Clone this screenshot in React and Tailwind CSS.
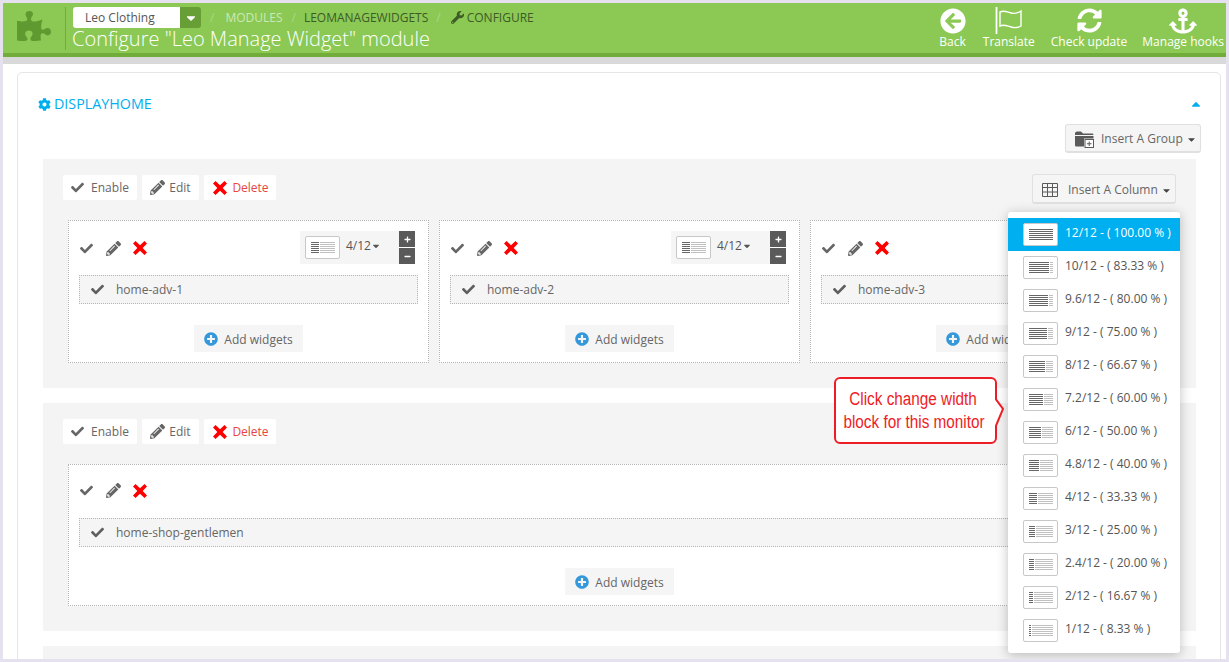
import {
  FaAnchor,
  FaArrowCircleLeft,
  FaCaretDown,
  FaCaretUp,
  FaCheck,
  FaCog,
  FaMinus,
  FaPencilAlt,
  FaPlus,
  FaPlusCircle,
  FaPuzzlePiece,
  FaSyncAlt,
  FaWrench,
} from "react-icons/fa";

const widths = [
  ["12/12 - ( 100.00 % )", 100],
  ["10/12 - ( 83.33 % )", 83],
  ["9.6/12 - ( 80.00 % )", 80],
  ["9/12 - ( 75.00 % )", 75],
  ["8/12 - ( 66.67 % )", 67],
  ["7.2/12 - ( 60.00 % )", 60],
  ["6/12 - ( 50.00 % )", 50],
  ["4.8/12 - ( 40.00 % )", 40],
  ["4/12 - ( 33.33 % )", 33],
  ["3/12 - ( 25.00 % )", 25],
  ["2.4/12 - ( 20.00 % )", 20],
  ["2/12 - ( 16.67 % )", 17],
  ["1/12 - ( 8.33 % )", 8],
];

const WidthIcon = ({ percent }) => {
  const dark = Math.round((percent / 100) * 24);
  return (
    <span className="flex h-[23px] w-[35px] shrink-0 items-center justify-center rounded-[2px] border border-[#c8c8c8] bg-white">
      <svg width="24" height="12" viewBox="0 0 24 12">
        {[0, 2, 4, 6, 8, 10].map((y) => (
          <g key={y}>
            <rect x="0" y={y} width={dark} height="1" fill="#666666" />
            <rect x={dark + 1} y={y} width={Math.max(0, 23 - dark)} height="1" fill="#c0c0c0" />
          </g>
        ))}
      </svg>
    </span>
  );
};

const CrossIcon = () => (
  <svg width="14" height="14" viewBox="0 0 14 14" fill="#ff0000" className="shrink-0">
    <path d="M2.500 0 7 4.300 11.500 0 14 2.500 9.700 7 14 11.500 11.500 14 7 9.700 2.500 14 0 11.500 4.300 7 0 2.500z" />
  </svg>
);

const FlagIcon = () => (
  <svg width="28" height="27" viewBox="0 0 28 27" fill="none" stroke="white">
    <path d="M1.500 0v27" strokeWidth="1.800" />
    <path d="M5 5c4-2 7 0 11 1s7 0 10-2v15c-3 2-6 2-10 1s-7-3-11-1z" strokeWidth="1.400" />
  </svg>
);

const FolderIcon = () => (
  <svg width="20" height="18" viewBox="0 0 20 18" fill="#5a5a5a">
    <path d="M0 3.500C0 2.500.8 1.500 2 1.500h4l2 2h9c1 0 1.500.6 1.500 1.500H0z" />
    <path d="M0 6h18.500v2.500H9v8H1.500C.6 16.500 0 16 0 15z" />
    <rect x="10" y="9.500" width="8.500" height="8" fill="white" stroke="#5a5a5a" />
    <path d="M13.700 11.500h1v1.800h1.800v1h-1.800v1.800h-1v-1.800h-1.800v-1h1.800z" />
  </svg>
);

const TableIcon = () => (
  <svg width="16" height="14" viewBox="0 0 16 14" fill="none" stroke="#5a5a5a">
    <path d="M.5.500h15v13H.5zM.5 4.500h15M.5 9h15M5.500.500v13M10.500.500v13" />
  </svg>
);

const ToolButton = ({ icon, label, className = "" }) => (
  <button className={`flex h-[25px] items-center justify-center rounded-[2px] bg-white text-[12px] ${className}`}>
    {icon}
    <span className="pt-[1px]">{label}</span>
  </button>
);

const GroupTools = () => (
  <div className="flex gap-[5px]">
    <ToolButton icon={<FaCheck className="text-[13px] text-[#666666]" />} label="Enable" className="w-[74px] gap-[7px] text-[#666666]" />
    <ToolButton icon={<FaPencilAlt className="text-[15px] text-[#666666]" />} label="Edit" className="w-[57px] gap-[4px] text-[#666666]" />
    <ToolButton icon={<CrossIcon />} label="Delete" className="w-[72px] gap-[5px] pl-[2px] text-[#e8463f]" />
  </div>
);

const InsertButton = ({ icon, label, className = "" }) => (
  <button className={`flex items-center rounded-[3px] border border-[#e0e0e0] border-b-2 bg-[#f5f5f5] pt-[2px] text-[12px] text-[#666666] ${className}`}>
    {icon}
    <span>{label}</span>
    <FaCaretDown className="ml-[3px] text-[11px] text-[#444444]" />
  </button>
);

const WidthSelect = () => (
  <div className="flex items-start">
    <div className="flex h-[33px] w-[99px] items-center bg-[#f5f5f5] pl-[5px]">
      <WidthIcon percent={33} />
      <span className="-mt-[3px] ml-[6px] text-[12px] text-[#555555]">4/12</span>
      <FaCaretDown className="-mt-[3px] text-[10px] text-[#555555]" />
    </div>
    <div className="flex flex-col gap-px">
      <span className="flex h-4 w-4 items-center justify-center bg-[#5a5a5a] text-white">
        <FaPlus className="text-[7px]" />
      </span>
      <span className="flex h-4 w-4 items-center justify-center bg-[#5a5a5a] text-white">
        <FaMinus className="text-[7px]" />
      </span>
    </div>
  </div>
);

const WidgetColumn = ({ name, className = "", selector = true, compact = false }) => (
  <div
    className={`flex flex-col border border-dotted border-[#b5b5b5] bg-white px-[10px] ${
      compact ? "h-[142px] pt-[9px]" : "h-[143px] pt-[10px]"
    } ${className}`}
  >
    <div className={`flex items-center justify-between pr-[3px] ${compact ? "h-[32px]" : "h-[33px]"}`}>
      <div className="flex items-center pl-[1px] pt-[1px]">
        <FaCheck className="text-[13px] text-[#666666]" />
        <FaPencilAlt className="ml-[13px] text-[15px] text-[#666666]" />
        <span className="ml-[12px]">
          <CrossIcon />
        </span>
      </div>
      {selector && <WidthSelect />}
    </div>
    <div
      className={`flex h-[29px] items-center border border-dotted border-[#b5b5b5] bg-[#f5f5f5] pl-[11px] text-[12px] text-[#666666] ${
        compact ? "mt-[12px]" : "mt-[11px]"
      }`}
    >
      <FaCheck className="text-[13px] text-[#5f5f5f]" />
      <span className="ml-[12px] pt-[1px]">{name}</span>
    </div>
    <div className="mt-[21px] flex justify-center">
      <button className="flex h-[27px] w-[109px] items-center justify-center gap-[6px] bg-[#f5f5f5] text-[12px] text-[#666666]">
        <FaPlusCircle className="text-[14px] text-[#3498db]" />
        <span className="pt-[2px]">Add widgets</span>
      </button>
    </div>
  </div>
);

const GroupPanel = ({ className = "", action, children }) => (
  <section className={`bg-[#f4f4f4] px-[20px] pt-[16px] ${className}`}>
    <div className="flex h-[30px] items-start justify-between">
      <GroupTools />
      {action}
    </div>
    {children}
  </section>
);

const HeaderAction = ({ icon, label, className = "" }) => (
  <button className={`flex flex-col items-center text-[12px] leading-[14px] text-white ${className}`}>
    <span className="flex h-[29px] items-center">{icon}</span>
    {label}
  </button>
);

const App = () => {
  return (
    <div className="relative h-[662px] w-[1229px] overflow-hidden border-[3px] border-[#e6e1ef] bg-white font-['Open_Sans',sans-serif]">
      <header className="flex h-[54px] items-start justify-between border-b-4 border-[#72ad3c] bg-[#8bc954]">
        <div className="flex">
          <div className="flex w-[48px] justify-center pl-[14px] pt-[4px]">
            <FaPuzzlePiece className="text-[38px] text-[#5f9a30]" />
          </div>
          <div className="ml-[14px] mt-[4px] h-[43px] border-l border-[#72ad3c] pl-[7px]">
            <div className="flex items-center text-[12px]">
              <div className="flex h-[21px] w-[128px] overflow-hidden rounded-[3px]">
                <span className="flex-1 bg-white pl-[12px] leading-[21px] text-[#555555]">Leo Clothing</span>
                <span className="flex w-[21px] items-center justify-center bg-[#679f36] text-white">
                  <FaCaretDown className="text-[14px]" />
                </span>
              </div>
              <span className="ml-[9px] text-[#a9d886]">/</span>
              <span className="ml-[11px] text-[#cde8b5]">MODULES</span>
              <span className="ml-[9px] text-[#a9d886]">/</span>
              <span className="ml-[8px] text-[#3e5a26]">LEOMANAGEWIDGETS</span>
              <span className="ml-[8px] text-[#a9d886]">/</span>
              <FaWrench className="ml-[10px] text-[13px] text-[#3e5a26]" />
              <span className="ml-[3px] text-[#3e5a26]">CONFIGURE</span>
            </div>
            <h1 className="-ml-[1px] text-[20px] font-light leading-[22px] text-white">Configure "Leo Manage Widget" module</h1>
          </div>
        </div>
        <div className="mr-[2px] mt-[3px] flex gap-[15px]">
          <HeaderAction icon={<FaArrowCircleLeft className="text-[26px]" />} label="Back" className="mr-[2px]" />
          <HeaderAction icon={<FlagIcon />} label="Translate" className="mr-[1px]" />
          <HeaderAction icon={<FaSyncAlt className="text-[25px]" />} label="Check update" />
          <HeaderAction icon={<FaAnchor className="text-[28px]" />} label="Manage hooks" />
        </div>
      </header>
      <div className="h-[7px] bg-[#d9d9d9]"></div>

      <main className="ml-[14px] mr-[5px] mt-[8px] h-[600px] rounded-[5px] border border-[#e6e6e6] pl-[25px] pr-[24px] pt-[21px]">
        <div className="flex h-[20px] items-center justify-between">
          <h2 className="-ml-[5px] flex items-center gap-[3px] text-[14.300px] text-[#00aff0]">
            <FaCog className="text-[13px]" />
            DISPLAYHOME
          </h2>
          <FaCaretUp className="mr-[-7px] text-[14px] text-[#00aff0]" />
        </div>
        <div className="mr-[-5px] mt-[10px] flex justify-end">
          <InsertButton
            icon={<span className="mr-[6px]"><FolderIcon /></span>}
            label="Insert A Group"
            className="h-[29px] w-[136px] pl-[9px]"
          />
        </div>
        <GroupPanel
          className="mt-[6px] h-[229px]"
          action={
            <div className="-mt-[1px]">
              <InsertButton
                icon={<span className="mr-[10px]"><TableIcon /></span>}
                label="Insert A Column"
                className="h-[30px] w-[144px] pl-[9px] pt-[3px]"
              />
            </div>
          }
        >
          <div className="ml-[5px] mt-[15px] flex gap-[10px]">
            <WidgetColumn name="home-adv-1" className="w-[361px] shrink-0" />
            <WidgetColumn name="home-adv-2" className="w-[361px] shrink-0" />
            <WidgetColumn name="home-adv-3" className="w-[361px] shrink-0" selector={false} />
          </div>
        </GroupPanel>
        <GroupPanel className="mt-[15px] h-[228px]">
          <div className="ml-[5px] mt-[15px]">
            <WidgetColumn name="home-shop-gentlemen" className="w-[1103px]" selector={false} compact />
          </div>
        </GroupPanel>
        <section className="mt-[15px] h-[40px] bg-[#f4f4f4]"></section>
      </main>

      {/* width picker, opened over the panels */}
      <ul className="absolute left-[1005px] top-[209px] w-[172px] rounded-[3px] bg-white py-[6px] text-[12px] text-[#555555] shadow-[0_2px_12px_rgba(0,0,0,0.25)]">
        {widths.map(([label, percent], i) => (
          <li
            key={label}
            className={`flex h-[33px] items-center gap-[7px] pl-[15px] ${i === 0 ? "bg-[#00aff0] text-white" : ""}`}
          >
            <WidthIcon percent={percent} />
            <span className="-mt-[3px]">{label}</span>
          </li>
        ))}
      </ul>

      {/* red callout */}
      <div className="absolute left-[831px] top-[374px] flex h-[67px] w-[163px] flex-col items-center justify-center rounded-[6px] border-2 border-[#ee1c25] bg-white font-['Liberation_Sans',sans-serif] text-[18px] leading-[23px] text-[#ee1c25]">
        <span className="mr-[5px] scale-x-[0.85] whitespace-nowrap">Click change width</span>
        <span className="mr-[2px] scale-x-[0.85] whitespace-nowrap">block for this monitor</span>
        <svg className="absolute left-[159px] top-[18px]" width="10" height="32" viewBox="0 0 10 32">
          <path d="M0 1l8 11-8 19" fill="white" stroke="#ee1c25" strokeWidth="2" />
        </svg>
      </div>
    </div>
  );
};

export default App;
